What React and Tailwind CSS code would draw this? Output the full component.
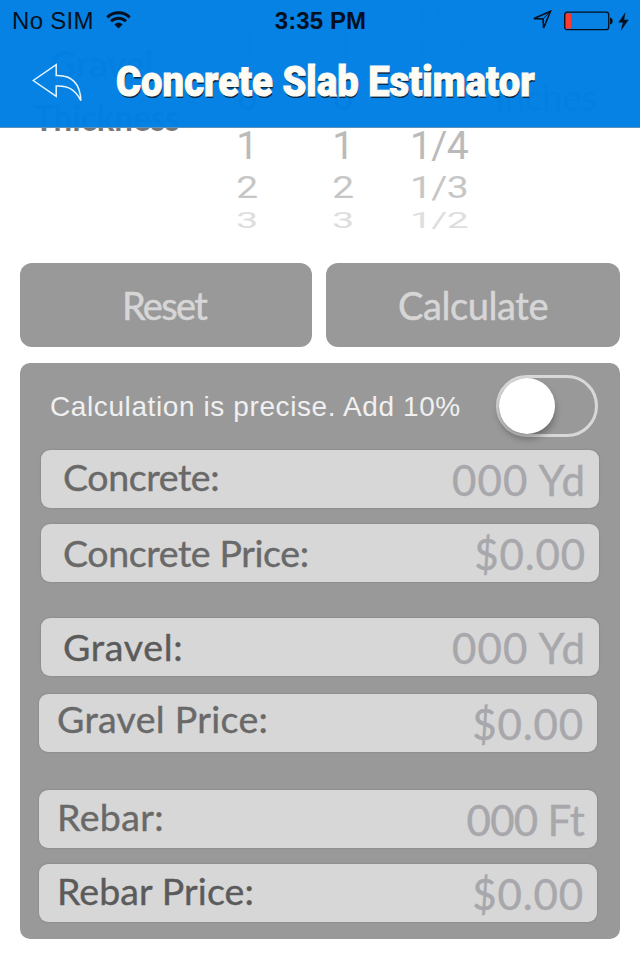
const results = [
    { label: 'Concrete:', value: '000 Yd', row: 'ml-[21px] mt-[13px]', text: 'pl-[22px] text-[#696969] leading-[54px] tracking-[-0.4px]', val: 'tracking-[1.1px] pr-[13px]' },
    { label: 'Concrete Price:', value: '$0.00', row: 'ml-[21px] mt-4', text: 'pl-[22px] text-[#696969] leading-[58px] tracking-[-0.4px]', val: 'tracking-[0.9px] pr-[13px]' },
    { label: 'Gravel:', value: '000 Yd', row: 'ml-[21px] mt-9', text: 'pl-[22px] text-[#5b5b5b] leading-[58px] tracking-[0.7px]', val: 'tracking-[1.1px] pr-[13px]' },
    { label: 'Gravel Price:', value: '$0.00', row: 'ml-[19px] mt-[18px]', text: 'pl-[18px] text-[#696969] leading-[50px] tracking-[0.3px]', val: 'tracking-[0.9px] pr-[13px]' },
    { label: 'Rebar:', value: '000 Ft', row: 'ml-[19px] mt-[38px]', text: 'pl-[18px] text-[#696969] leading-[54px] tracking-[0.4px]', val: 'tracking-[-0.7px] pr-[13px]' },
    { label: 'Rebar Price:', value: '$0.00', row: 'ml-[19px] mt-4', text: 'pl-[18px] text-[#5b5b5b] leading-[54px] tracking-[0.1px]', val: 'tracking-[0.9px] pr-[13px]' },
]

const wheels = [
    ['2', '1', '0', '1', '2', '3'],
    ['2', '1', '0', '1', '2', '3'],
    ['1/3', '1/4', '', '1/4', '1/3', '1/2'],
]

// each slot of the wheel gets flatter and paler away from the middle
const slots = [
    'h-[23px] scale-y-80 text-[#c4c4c4]',
    'h-[47px] text-[#b4b4b4]',
    'h-[54px] text-[#444]',
    'h-[44px] text-[#bababa]',
    'h-[40px] scale-y-80 text-[#c6c6c6]',
    'h-[26px] scale-y-56 text-[#dedede]',
]

const Wheel = ({ items }) => (
    <div className="w-24 flex flex-col font-['Roboto'] text-[39px] tracking-[-0.6px]">
        {items.map((item, i) => (
            <div key={i} className={`flex items-center justify-center leading-none ${slots[i]}`}>{item}</div>
        ))}
    </div>
)

const StatusBar = () => (
    <div className="h-10 pt-[2px] flex items-center justify-between pl-3 pr-[11px] text-[#04101f]">
        <div className="w-64 flex items-center gap-[12px]">
            <span className="text-[24px] tracking-[0.3px]">No SIM</span>
            <svg width="25" height="18" viewBox="0 0 25 18" fill="none" stroke="currentColor" strokeWidth="3" className="-mt-0.5">
                <path d="M1.3 6.4 C7.5 0.2 17.5 0.2 23.7 6.4" />
                <path d="M5 10.3 C9.2 6.2 15.8 6.2 20 10.3" />
                <path d="M8.4 13.4 C10.7 11.2 14.3 11.2 16.6 13.4 L12.5 17.6 Z" fill="currentColor" stroke="none" />
            </svg>
        </div>
        <span className="text-[24px] tracking-[0.1px] font-bold whitespace-nowrap">3:35 PM</span>
        <div className="w-64 flex items-center justify-end">
            <svg width="20" height="20" viewBox="0 0 20 20" fill="none" stroke="currentColor" strokeWidth="1.6" className="mr-3 -mt-0.5">
                <path d="M18.5 1.2 L2 8.6 L11 9 L11.6 18 Z" />
                <path d="M18.5 1.2 L11 9" strokeWidth="1" />
            </svg>
            <svg width="50" height="20" viewBox="0 0 50 20" fill="none">
                <rect x="0.7" y="1.2" width="44" height="17.5" rx="2.5" stroke="currentColor" strokeWidth="1.3" />
                <rect x="2" y="2.5" width="5" height="15" fill="#ff3b30" />
                <path d="M46 6.5 C49.6 7 49.6 13 46 13.5 Z" fill="currentColor" />
            </svg>
            <svg width="11" height="19" viewBox="0 0 11 19" fill="currentColor" className="ml-1">
                <path d="M7.5 0 L0.3 10.4 L4.8 10.4 L2.7 19 L10.7 7.7 L6.2 7.7 Z" />
            </svg>
        </div>
    </div>
)

const Header = () => (
    <header className="absolute inset-x-0 top-0 h-32 z-10 bg-[#0080e2]/98 border-b border-[#5b91bd]">
        <StatusBar />
        <div className="flex items-center h-[84px] pl-8">
            <svg width="51" height="40" viewBox="0 0 51 40" fill="none" stroke="#e9f6ff" strokeWidth="1.5" className="shrink-0">
                <path d="M1.2 18.5 L24.2 2.6 V13.5 C38 13 48 20 48.9 38.6 C43 27.5 36 23.4 24.2 24 V34.4 Z" />
            </svg>
            <h1 className="ml-[33px] w-[420px] whitespace-nowrap origin-left scale-x-[0.91] font-['Roboto'] font-black text-[42px] leading-none text-[#fdfcf4] [-webkit-text-stroke:1px_#fdfcf4] [text-shadow:1px_2px_0_#0c2a44]">
                Concrete Slab Estimator
            </h1>
        </div>
    </header>
)

const App = () => {
    return (
        <main className="relative w-[640px] h-[960px] overflow-hidden bg-white font-['Liberation_Sans',sans-serif]">
            <Header />

            {/* Thickness picker, scrolled partly under the header */}
            <section className="flex h-[263px]">
                <div className="w-[199px] pt-9 pl-[34px] font-['Lato'] font-bold text-[36px] leading-[54px] text-[#777]">
                    <div className="pl-4">Gravel</div>
                    <div className="origin-left scale-x-92">Thickness</div>
                </div>
                {wheels.map((items, i) => <Wheel key={i} items={items} />)}
                <div className="pl-2 pt-[70px] font-['Lato'] text-[36px] leading-[54px] text-[#777]">Inches</div>
            </section>

            <div className="flex gap-[14px] px-5 h-[84px] font-['Lato'] text-[38px] text-[#d6d6d6] [-webkit-text-stroke:0.5px_#d6d6d6]">
                <button className="w-[292px] rounded-xl bg-[#999] pr-1 tracking-[-1.7px]">Reset</button>
                <button className="w-[294px] rounded-xl bg-[#999] tracking-[-0.4px]">Calculate</button>
            </div>

            <section className="mx-5 mt-4 h-[576px] rounded-[10px] bg-[#999]">
                <div className="flex items-center justify-between h-[74px] pt-[12px] pl-[30px] pr-[22px]">
                    <span className="pt-0.5 text-[28px] tracking-[0.6px] text-[#f0f0f0] whitespace-nowrap">Calculation is precise. Add 10%</span>
                    <div className="w-[102px] h-[62px] shrink-0 rounded-full border-3 border-[#d8d8d8]">
                        <div className="size-14 rounded-full bg-white shadow-[0_5px_7px_rgba(0,0,0,0.3)]"></div>
                    </div>
                </div>

                {results.map(({ label, value, row, text, val }) => (
                    <div key={label} className={`flex justify-between w-[558px] h-[58px] rounded-[9px] bg-[#d7d7d7] shadow-[0_0_2px_#777] font-['Lato'] whitespace-nowrap ${row}`}>
                        <span className={`text-[37.5px] [-webkit-text-stroke:0.4px] ${text}`}>{label}</span>
                        <span className={`text-[42px] leading-[60px] text-[#a7a7ac] [-webkit-text-stroke:0.4px] ${val}`}>{value}</span>
                    </div>
                ))}
            </section>
        </main>
    )
}

export default App
